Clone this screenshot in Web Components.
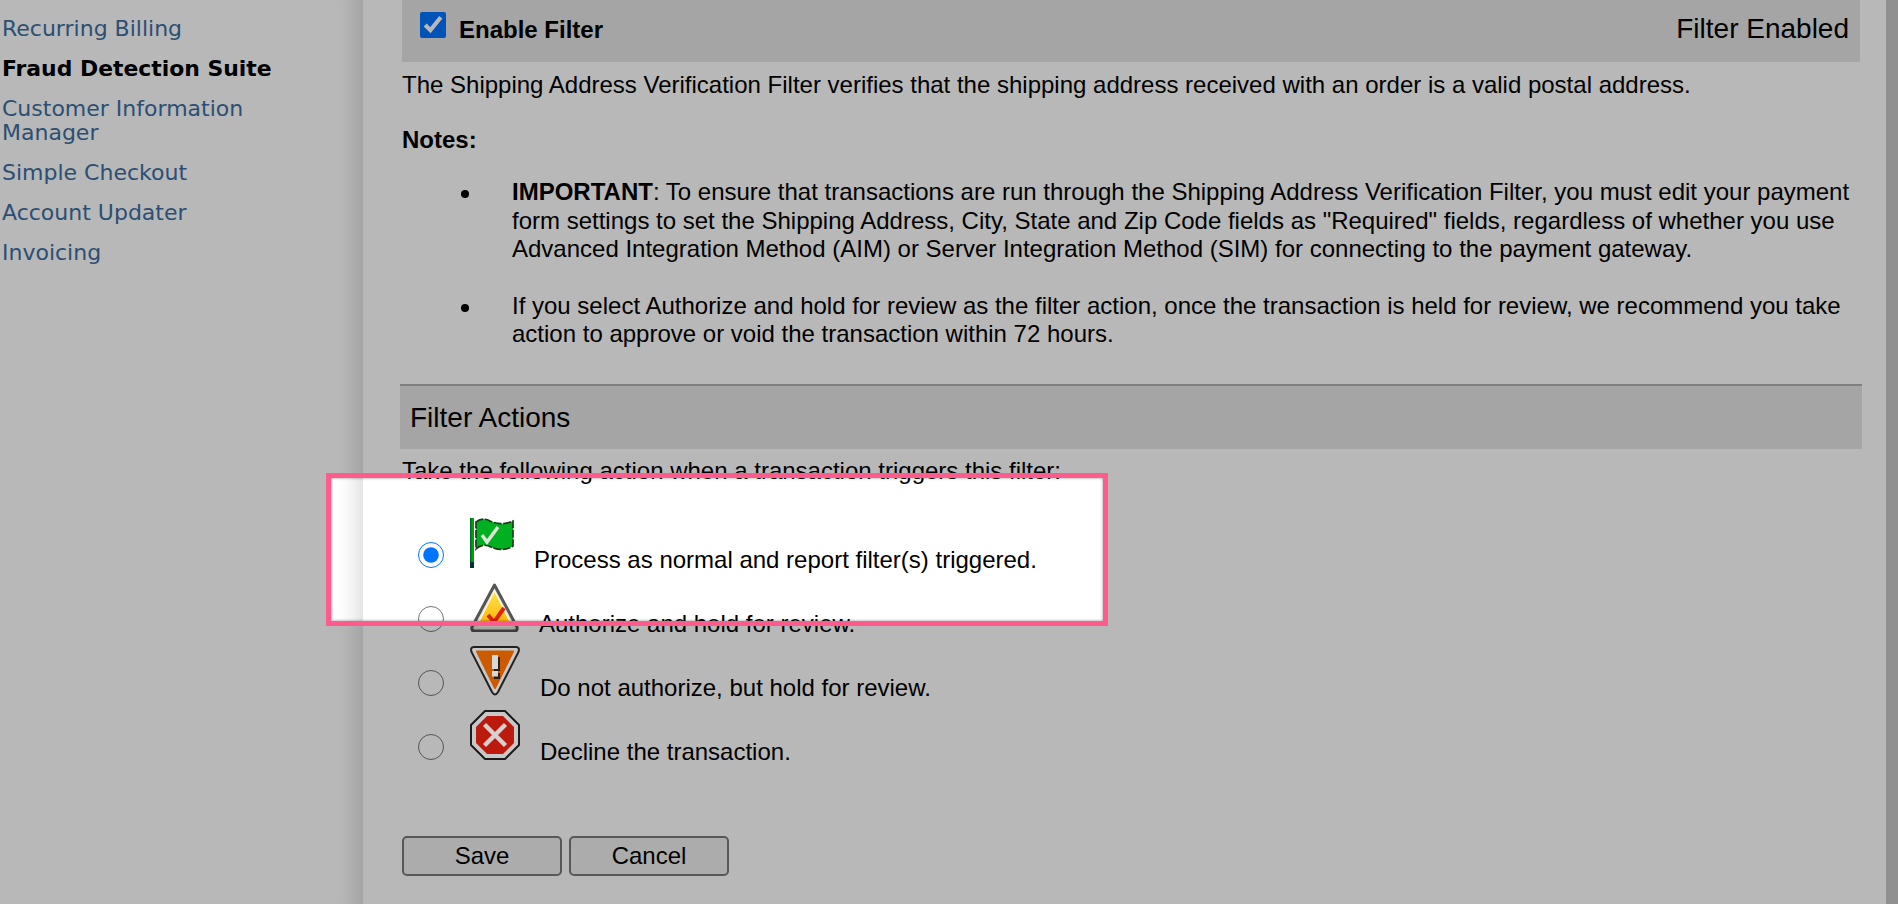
<!DOCTYPE html>
<html><head><meta charset="utf-8"><title>Filter</title>
<style>
html,body{margin:0;padding:0;height:100%;overflow:hidden;background:#fff}
body{font-family:"Liberation Sans",Arial,sans-serif;color:#000}
b{font-weight:700}
</style></head><body>
<app-shell>
  <side-nav slot="nav">
    <nav-item>Recurring Billing</nav-item>
    <nav-item active>Fraud Detection Suite</nav-item>
    <nav-item>Customer Information Manager</nav-item>
    <nav-item>Simple Checkout</nav-item>
    <nav-item>Account Updater</nav-item>
    <nav-item>Invoicing</nav-item>
  </side-nav>
  <filter-head status="Filter Enabled">Enable Filter</filter-head>
  <filter-notes>
    <p slot="intro">The Shipping Address Verification Filter verifies that the shipping address received with an order is a valid postal address.</p>
    <li><b>IMPORTANT</b>: To ensure that transactions are run through the Shipping Address Verification Filter, you must edit your payment form settings to set the Shipping Address, City, State and Zip Code fields as "Required" fields, regardless of whether you use Advanced Integration Method (AIM) or Server Integration Method (SIM) for connecting to the payment gateway.</li>
    <li>If you select Authorize and hold for review as the filter action, once the transaction is held for review, we recommend you take action to approve or void the transaction within 72 hours.</li>
  </filter-notes>
  <section-bar>Filter Actions</section-bar>
  <filter-actions>
    <action-option icon="flag" checked>Process as normal and report filter(s) triggered.</action-option>
    <action-option icon="warn">Authorize and hold for review.</action-option>
    <action-option icon="hold" above>Do not authorize, but hold for review.</action-option>
    <action-option icon="stop" above>Decline the transaction.</action-option>
  </filter-actions>
  <form-buttons><app-button>Save</app-button><app-button>Cancel</app-button></form-buttons>
</app-shell>
<spot-light></spot-light>
<script>
function def(name, css, html){
  customElements.define(name, class extends HTMLElement{
    connectedCallback(){
      if(this.shadowRoot) return;
      const r=this.attachShadow({mode:'open'});
      r.innerHTML='<style>'+css+'</style>'+(typeof html==='function'?html(this):html);
    }
  });
}
def('app-shell',`
:host{display:grid;grid-template-columns:363px 1fr 12px;width:1898px;height:904px;overflow:hidden}
.main{padding:0 26px 0 39px;min-width:0}
.edge{background:#c8c8c8}
`,`<slot name="nav"></slot><div class="main"><slot></slot></div><div class="edge"></div>`);
def('side-nav',`
:host{display:flex;flex-direction:column;gap:16px;padding:17px 66px 0 2px;box-sizing:border-box;height:904px;box-shadow:inset -26px 0 20px -18px rgba(0,0,0,.13)}
`,`<slot></slot>`);
def('nav-item',`
:host{display:block;font:22px/24px "DejaVu Sans",Verdana,sans-serif;color:#3c6ea3}
:host([active]){color:#000;font-weight:700;font-size:21.9px}
`,`<slot></slot>`);
def('filter-head',`
:host{display:flex;align-items:center;justify-content:space-between;height:62px;background:#e5e5e5;padding:0 11px 0 18px;font-size:24px}
.l{display:flex;align-items:center;gap:13px;font-weight:700;padding-bottom:2px}
input{width:26px;height:26px;margin:0 0 10px;accent-color:#0075ff}
.s{font-weight:400;font-size:28px;padding-bottom:5px}
`,h=>`<label class="l"><input type="checkbox" checked><span><slot></slot></span></label><span class="s">${h.getAttribute('status')}</span>`);
def('filter-notes',`
:host{display:block;font-size:24px;line-height:28.5px;padding-top:9px}
::slotted(p){margin:0}
h4{font-size:24px;margin:26px 0 24px;line-height:28.5px}
ul{margin:0;padding:0 0 0 110px;list-style:none}
::slotted(li){margin-bottom:28px}
::slotted(li)::before{content:"";display:inline-block;width:8px;height:8px;border-radius:50%;background:#000;margin:0 43px 0 -51px;vertical-align:2px}
`,`<slot name="intro"></slot><h4>Notes:</h4><ul><slot></slot></ul>`);
def('section-bar',`
:host{display:block;margin:35px -2px 0;height:63px;line-height:64px;border-top:2px solid #b0b0b0;background:#e5e5e5;padding-left:10px;font-size:28px}
`,`<slot></slot>`);
def('filter-actions',`
:host{display:block;font-size:24px}
p{margin:8px 0 32.5px;line-height:28.5px}
`,`<p>Take the following action when a transaction triggers this filter:</p><slot></slot>`);
const ICONS={
flag:`<svg width="44" height="50" viewBox="0 0 44 50">
<rect x="0" y="0" width="4" height="50" fill="#00a000"/><rect x="0" y="0" width="1.4" height="50" fill="#063"/><rect x="0" y="44" width="4" height="6" fill="#033"/>
<path d="M6 4C10 1 15 0 20 3C26 6 34 7 43 3V28C35 33 27 32 21 29C16 26 10 27 6 31Z" fill="#00b020" stroke="#1a3a1a" stroke-width="1.700" stroke-dasharray="8 1.500"/>
<path d="M12 17l5 7 11-15" fill="none" stroke="#dfe5d6" stroke-width="3.500"/></svg>`,
warn:`<svg width="49" height="50" viewBox="0 0 49 50"><defs><linearGradient id="y" x1="0" y1="0" x2="0" y2="1"><stop offset="0" stop-color="#ffe24a"/><stop offset="1" stop-color="#ffb400"/></linearGradient></defs>
<path d="M24.5 3L47 45Q48 49 44 49H5Q1 49 2 45Z" fill="#e8e4d8" stroke="#555" stroke-width="3" stroke-linejoin="round"/>
<path d="M24.500 9L42 44H7Z" fill="url(#y)" stroke="#fff" stroke-width="1"/>
<path d="M18 33l6 7 10-14" fill="none" stroke="#e02010" stroke-width="4"/></svg>`,
hold:`<svg width="50" height="50" viewBox="0 0 50 50">
<path d="M4 1H46Q50 1 48.500 6L28 46Q25 51 22 46L1.500 6Q0 1 4 1Z" fill="#c8c8c8" stroke="#222" stroke-width="2"/>
<path d="M7 5.500H43L25 42Z" fill="#cc5a00" stroke="#cc5a00" stroke-width="2" stroke-linejoin="round"/>
<rect x="22" y="10" width="6" height="14" fill="#2a2018" transform="translate(2 1)"/><rect x="22" y="26" width="6" height="6" fill="#2a2018" transform="translate(2 1)"/>
<rect x="22" y="9" width="6" height="14" fill="#d8d8d8"/><rect x="22" y="25" width="6" height="5.500" fill="#d8d8d8"/></svg>`,
stop:`<svg width="50" height="50" viewBox="0 0 50 50">
<path d="M15 1H35L49 15V35L35 49H15L1 35V15Z" fill="#c8c8c8" stroke="#1a1a1a" stroke-width="2" stroke-linejoin="round"/>
<path d="M17 6H33L44 17V33L33 44H17L6 33V17Z" fill="#bd1a0f"/>
<path d="M14.500 14.500L35.500 35.500M35.500 14.500L14.500 35.500" stroke="#d8d0cc" stroke-width="4.500"/></svg>`};
def('action-option',`
:host{display:flex;align-items:baseline;height:64px;padding-left:16px}
input{width:26px;height:26px;margin:0 26px 0 0;accent-color:#0075ff;flex:none}
svg{display:block}
.i{flex:none;display:block;height:50px}
:host([above]) .i{position:relative;z-index:30}
span.t{margin-left:20px;line-height:28.5px}
`,h=>`<input type="radio" name="x"${h.hasAttribute('checked')?' checked':''}><span class="i">${ICONS[h.getAttribute('icon')]}</span><span class="t"><slot></slot></span>`);
def('form-buttons',`
:host{display:flex;gap:7px;margin-top:62px}
`,`<slot></slot>`);
def('app-button',`
:host{display:block}
button{width:160px;height:40px;box-sizing:border-box;border:2px solid #7a7a7a;border-radius:5px;background:#efefef;font:24px "Liberation Sans",Arial,sans-serif;color:#000;padding:0}
`,`<button><slot></slot></button>`);
def('spot-light',`
:host{display:block;position:fixed;left:326px;top:473px;width:782px;height:153px;box-sizing:border-box;border:5.5px solid #ff5c8d;z-index:10;box-shadow:0 0 0 2000px rgba(0,0,0,.28),inset 0 0 3px rgba(0,0,0,.45);pointer-events:none}
`,``);
</script>
</body></html>
